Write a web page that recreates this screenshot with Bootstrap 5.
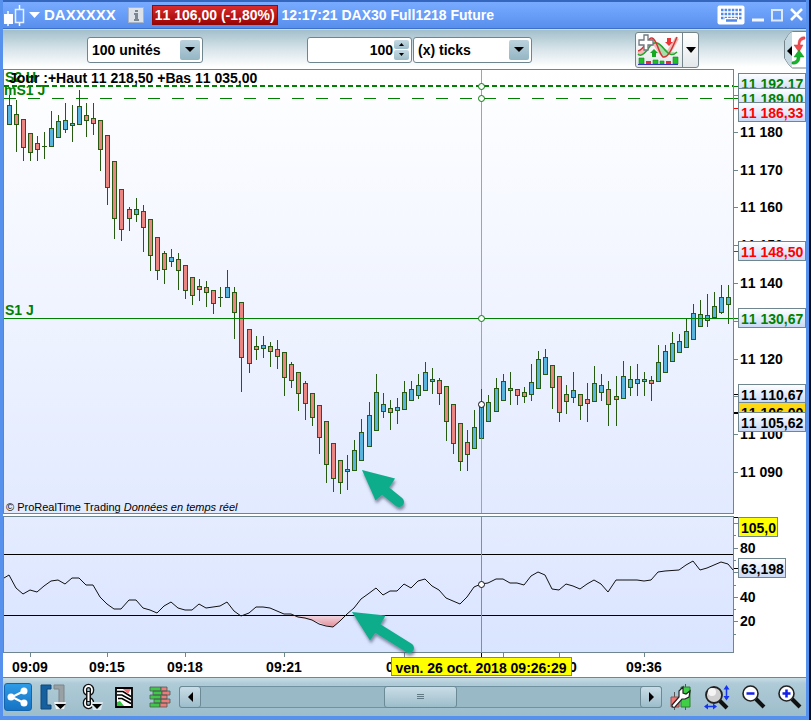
<!DOCTYPE html>
<html lang="fr">
<head>
<meta charset="utf-8">
<meta name="viewport" content="width=device-width, initial-scale=1">
<title>DAXXXXX - DAX30 Full1218 Future</title>
<link href="https://cdn.jsdelivr.net/npm/bootstrap@5.3.0/dist/css/bootstrap.min.css" rel="stylesheet">
<style>
body{background:#0a1020;padding-right:2px;font:bold 14px/18px "Liberation Sans",Arial,sans-serif;font-kerning:none;color:#000;overflow-x:hidden}
.win{min-height:100vh;background:#fff;border:solid #5791ee;border-width:0 3px 4px;box-shadow:inset 0 -1px #3a6cc4}
.titlebar{height:29px;background:linear-gradient(#78abff,#6a9ff9 45%,#588fec);border-top:2px solid #3566bd;border-bottom:1px solid #3d70c9;color:#fff;padding:0 3px 1px 0}
.titlebar button,.plain{background:none;border:0;padding:0;color:inherit;display:flex}
.g7{margin-left:7px}.g12{margin-left:12px}.g14{margin-left:14px}
.sym{font-size:15px;margin-left:4px}
.quote{background:linear-gradient(#d92c2c,#9c0505);border:1px solid #8f0b0b;padding:0 2px;height:20px;margin:0 4px 0 8px}
.tools{height:40px;background:linear-gradient(#a2bfcb,#d3e1e7 45%,#fff 95%);border-top:1px solid #c8dce6}
.fieldbox{height:26px;background:#fff;border:1px solid #70868f;border-radius:3px;padding:2px}
.fieldbox select,.fieldbox input{appearance:none;border:0;background:none;font:inherit;color:#000;padding:0 0 0 2px;outline:0;min-width:0;flex:1}
.fieldbox input{text-align:right;padding-right:1px}
.unit{width:116px;margin-left:84px}.count{width:105px;margin-left:104px}.kind{width:119px;margin-left:1px}
.arrowbox{width:20px;background:linear-gradient(#bbd2dc,#94b6c4);border-radius:2px;display:flex;align-items:center;justify-content:center}
.spin{width:15px;gap:1px}
.spin button{flex:1;border:0;padding:0;border-radius:2px;background:linear-gradient(#c5dae3,#9dbdca);display:flex;align-items:center;justify-content:center}
.indic{width:64px;height:36px;border:1px solid #75838a;border-radius:3px;background:linear-gradient(#fff,#e4e8ea);margin-left:103px}
.indic button+button{border-left:1px solid #75838a;width:16px;align-items:center;justify-content:center}
.plot{min-width:0;flex:1}
.plot svg,.scale svg,.timeline svg{display:block;width:100%}
.scale{width:72px;flex:none}
.quotes svg{height:445px}
.osc{margin-top:2px}.osc svg{height:137px}
.timeline svg{height:24px}
.timeline,.scale{font-size:14px}
svg{overflow:visible}
.cap{position:absolute;white-space:nowrap;line-height:16px}
.grn{color:#008000}
.c1{left:2px;top:0}.c2{left:1px;top:13px}.c3{left:6px;top:1px}.c4{left:2px;top:233px}
.legal{left:3px;bottom:0;font-size:11px;line-height:14px;font-weight:400;font-kerning:normal}
.bottombar{height:39px;border-top:1px solid #70868f;background:linear-gradient(#c8dde6,#aecbd7 15%,#9ebdca)}
.share{width:28px;height:28px;margin-left:1px;background:linear-gradient(#2f9be6,#1673c4);border:1px solid #1565ad;border-radius:3px;align-items:center;justify-content:center}
.track{height:22px;background:#9ab9c7;border:1px solid #7193a1;border-radius:3px}
.track button{background:linear-gradient(#c9dde6,#9dbdcb);border:1px solid #6c8996;border-radius:3px;width:22px;margin:-1px;display:flex;align-items:center;justify-content:center;padding:0}
.track .thumb{width:73px;margin:-1px 0}
</style>
<script src="https://cdn.jsdelivr.net/npm/bootstrap@5.3.0/dist/js/bootstrap.bundle.min.js"></script>
</head>
<body>
<div class="win d-flex flex-column">
<header class="titlebar d-flex align-items-center">
  <svg width="22" height="24" viewBox="0 0 22 24" aria-hidden="true"><path d="M5 8v15M16.500 2v21" stroke="#fff" stroke-width="1.500"/><path d="M1 11h9v10H1z" fill="#fff"/><path d="M12.500 6.500h8v13h-8z" fill="#6a9ff9" stroke="#e8f1ff" stroke-width="1.500"/></svg>
  <button aria-label="Choisir une valeur" class="ms-1"><svg width="11" height="6"><path d="M0 0h11L5.500 6z" fill="#fff"/></svg></button>
  <span class="sym">DAXXXXX</span>
  <button aria-label="Informations" class="g12"><svg width="16" height="16"><path d="M.5.5h15v15H.5z" fill="#dce2e8" stroke="#a9b5c6"/><path d="M7 3h3v2H7zM6 6h4v6h1v2H6v-2h1V8H6z" fill="#7b8791"/></svg></button>
  <span class="quote">11 106,00 (-1,80%)</span>
  <span class="text-nowrap">12:17:21 DAX30 Full1218 Future</span>
  <button aria-label="Clavier" class="ms-auto"><svg width="28" height="20"><rect x=".5" y=".5" width="27" height="19" rx="2" fill="#fff"/><path d="M4 5h21M4 9h21M4 13h21" stroke="#5189ea" stroke-width="2.500" stroke-dasharray="2.500 1.100"/><path d="M8 15.500h12" stroke="#fff" stroke-width="5"/><path d="M9 15.500h11" stroke="#5189ea" stroke-width="2.500"/></svg></button>
  <button aria-label="Réduire" class="g7"><svg width="12" height="16"><path d="M0 13h12" stroke="#f2f6ff" stroke-width="3"/></svg></button>
  <button aria-label="Agrandir" class="g7"><svg width="12" height="14"><path d="M1 2h10v10.500H1z" fill="none" stroke="#dce9ff" stroke-width="2"/></svg></button>
  <button aria-label="Fermer" class="g7"><svg width="13" height="14"><path d="M1 1l11 11M12 1L1 12" stroke="#fff" stroke-width="2.500"/></svg></button>
</header>

<div class="tools d-flex align-items-center">
  <div class="fieldbox unit d-flex"><select aria-label="Nombre d'unités"><option>100 unités</option></select><span class="arrowbox"><svg width="10" height="5"><path d="M0 0h10L5 5z"/></svg></span></div>
  <div class="fieldbox count d-flex"><input type="text" value="100" aria-label="Nombre de ticks"><div class="spin d-flex flex-column"><button aria-label="Plus"><svg width="5" height="3"><path d="M0 3h5L2.500 0z"/></svg></button><button aria-label="Moins"><svg width="5" height="3"><path d="M0 0h5L2.500 3z"/></svg></button></div></div>
  <div class="fieldbox kind d-flex"><select aria-label="Unité de temps"><option>(x) ticks</option></select><span class="arrowbox"><svg width="10" height="5"><path d="M0 0h10L5 5z"/></svg></span></div>
  <div class="indic d-flex">
    <button class="plain flex-grow-1" aria-label="Ajouter un indicateur"><svg width="45" height="34" viewBox="0 0 45 34">
      <path d="M2 21c8-2 9-16 14-13s6 10 11 14c3 2 9-7 14-17" fill="none" stroke="#f4b9b6" stroke-width="4"/>
      <path d="M20 9c5 1 10 11 20 10l-13 5z" fill="#a8dca8"/>
      <path d="M2 21c3 4 9-3 12-8 7-8 12 1 16 5 3 4 7 5 11 1" fill="none" stroke="#23a52e" stroke-width="1.500"/>
      <path d="M2 18c7-1 9-14 14-13s6 14 11 19c5 1 9-8 14-20" fill="none" stroke="#cf3737" stroke-width="1.500"/>
      <path d="M8 2h4v5h5v5h-5v5H8v-5H3V7h5z" fill="#fff" stroke="#6f7780" stroke-width="1.300"/>
      <path d="M31 5h4v4h2l-4 4-4-4h2z" fill="#eb3438"/><path d="M16 24v-4h-2l4-4 4 4h-2v4z" fill="#13aa20"/>
      <path d="M3 25h5v6H3zM17 27h5v4h-5zM24 28h4v3h-4zM37 24h5v7h-5z" fill="#1fbd29" stroke="#128c1b" stroke-width=".6"/><path d="M10 28h5v3h-5zM30 28h5v3h-5z" fill="#de2f36"/><path d="M2 31.500h40" stroke="#3434c5"/></svg></button>
    <button class="plain" aria-label="Liste des indicateurs"><svg width="10" height="6"><path d="M0 0h10L5 6z"/></svg></button>
  </div>
  <button class="plain ms-auto" aria-label="Ordres"><svg width="22" height="38" viewBox="0 0 22 38">
    <path d="M22 .5H8.500L5 3 .5 10v17L5 34l3.500 3H22" fill="#fff" stroke="#75838a"/><path d="M8 1L5 3 1 10v17l4 7 3 2z" fill="#c4d9e2"/><path d="M8 15v10l-5-5z"/>
    <path d="M21 6c-5-1-7 3-7 8h-4l5 7 4-7h-3c0-3 1-5 5-6z" fill="#f04c50" stroke="#d53136" stroke-width=".5"/><path d="M8 33c6 1 8-3 8-7h4l-5-7-5 7h3c0 3-1 4-5 5z" fill="#16b32c" stroke="#0a8d1d" stroke-width=".5"/></svg></button>
</div>

<main>
<section class="quotes d-flex">
  <div class="plot position-relative">
    <svg id="price" viewBox="3 69 731 445" preserveAspectRatio="none" role="img" aria-label="Cours DAX30">
      <defs><linearGradient id="g1" x2="0" y2="1"><stop stop-color="#fff"/><stop offset="1" stop-color="#e2eaff"/></linearGradient>
      <linearGradient id="g2" x2="0" y2="1"><stop stop-color="#e5ecff"/><stop offset="1" stop-color="#d9e4ff"/></linearGradient>
      <linearGradient id="g3" x2="0" y2="1"><stop stop-color="#efd7e2"/><stop offset="1" stop-color="#e58c96"/></linearGradient>
      <linearGradient id="tag" x2="0" y2="1"><stop stop-color="#fff"/><stop offset="1" stop-color="#c9d8f5"/></linearGradient>
      <filter id="sh" x="-30%" y="-30%" width="170%" height="180%"><feDropShadow dx="1" dy="3" stdDeviation="1.500" flood-color="#444a66" flood-opacity=".6"/></filter></defs>
      <rect x="3.500" y="69.500" width="730" height="444" fill="url(#g1)" stroke="#70868f"/>
      <path d="M481.500 70v443" stroke="#8ba0f2"/>
      <path d="M4 86h729" stroke="#008000" stroke-width="2" stroke-dasharray="5 3"/>
      <path d="M4 98.500h729" stroke="#008000" stroke-dasharray="12 12"/>
      <g id="candles" shape-rendering="crispEdges"></g>
      <path d="M4 318.500h729" stroke="#008000"/>
      <path d="M481.500 404v35" stroke="#3d6bdc"/>
      <g fill="#fff" stroke="#008000"><circle cx="481.500" cy="86.500" r="3"/><circle cx="481.500" cy="98.500" r="3"/><circle cx="481.500" cy="318.500" r="3"/><circle cx="481.500" cy="404.500" r="3" stroke="#111"/></g>
      <g filter="url(#sh)" fill="#0aad8b"><path d="M362 470l33 8.500-6 9.500-7 7-6.500 5.500z"/><path d="M383 489l16 13" stroke="#0aad8b" stroke-width="10" stroke-linecap="round"/></g>
    </svg>
    <span class="cap grn c1">S2 H</span><span class="cap grn c2">mS1 J</span><span class="cap c3">Jour :+Haut 11 218,50 +Bas 11 035,00</span><span class="cap grn c4">S1 J</span>
    <div class="cap legal">© ProRealTime Trading <i>Données en temps réel</i></div>
  </div>
  <div class="scale"><svg id="pscale" viewBox="734 69 72 445"></svg></div>
</section>
<section class="osc d-flex">
  <div class="plot"><svg viewBox="3 516 731 137" preserveAspectRatio="none" role="img" aria-label="Indicateur" class="position-relative z-1">
    <rect x="3.500" y="516.500" width="730" height="136" fill="url(#g2)" stroke="#70868f"/>
    <path d="M285 615.500l18 3 14 3 8 3.500 8 2 7-6 7-5.500z" fill="url(#g3)"/>
    <path d="M4 554.500h729M4 615.500h729" stroke="#000"/>
    <path d="M481.500 517v136" stroke="#6f88ec"/>
    <polyline id="line" fill="none" stroke="#111"/>
    <circle cx="481.500" cy="584.500" r="3" fill="#fff" stroke="#111"/>
    <g filter="url(#sh)" fill="#0aad8b"><path d="M352 612l33.500 3.500-5 9-5 8-5.500 8z"/><path d="M377 628l32 20" stroke="#0aad8b" stroke-width="10" stroke-linecap="round"/></g>
  </svg></div>
  <div class="scale"><svg id="oscale" viewBox="734 516 72 137"></svg></div>
</section>
<div class="timeline"><svg id="tscale"></svg></div>
</main>

<footer class="bottombar d-flex align-items-center mt-auto">
  <button class="plain share" aria-label="Partager"><svg width="22" height="20"><path d="M17 4L5 10l12 6" fill="none" stroke="#fff" stroke-width="2"/><circle cx="17" cy="4" r="3.500" fill="#fff"/><circle cx="4" cy="10" r="3.500" fill="#fff"/><circle cx="17" cy="16" r="3.500" fill="#fff"/></svg></button>
  <button class="plain ms-2" aria-label="Zones"><svg width="27" height="26"><path d="M1 1h10v4H7v16h4v4H1z" fill="#17609f" stroke="#0e4678"/><path d="M14 1h10v20h-5V5h-5z" fill="#9aa1a4" stroke="#7d8588"/><path d="M14 18h12l-2 7H16z" fill="#fff" opacity=".8"/><path d="M15 20h11l-5.500 5z"/></svg></button>
  <button class="plain g14" aria-label="Lier"><svg width="22" height="26"><g fill="none"><rect x="4" y="2" width="7" height="8" rx="3.500" stroke="#111" stroke-width="4.500"/><rect x="4" y="15" width="7" height="8" rx="3.500" stroke="#111" stroke-width="4.500"/><rect x="4" y="2" width="7" height="8" rx="3.500" stroke="#fff" stroke-width="1.800"/><rect x="4" y="15" width="7" height="8" rx="3.500" stroke="#fff" stroke-width="1.800"/><path d="M7.500 7v11" stroke="#111" stroke-width="5"/><path d="M7.500 8v9" stroke="#fff" stroke-width="2"/></g><path d="M10 18h12l-2 8h-8z" fill="#dbe8ee"/><path d="M11 20h10l-5 5z"/></svg></button>
  <button class="plain g12" aria-label="Modèles"><svg width="18" height="21"><path d="M1 1h16v19H1z" fill="#fff" stroke="#000" stroke-width="1.800"/><path d="M2 4.500h6l8 5M2 8h5l9 5M3 11.500h4l9 5" stroke="#000" stroke-width="1.700" fill="none"/><path d="M8 2h8l-3 5z" fill="#f07077"/><path d="M2 19v-4l3-1 4 5z" fill="#34c441"/></svg></button>
  <button class="plain ms-3" aria-label="Carnet d'ordres"><svg width="22" height="22"><g stroke="#4b5b57" stroke-width=".8"><path d="M1 1h11v4H1zM4 5h9v4H4zM1 9h11v4H1zM5 13h7v4H5zM1 17h10v4H1z" fill="#3fc847"/><path d="M12 1h6v4h-6zM13 5h8v4h-8zM12 9h6v4h-6zM12 13h9v4h-9zM11 17h7v4h-7z" fill="#ec7d7b"/></g></svg></button>
  <div class="track d-flex flex-grow-1 ms-2 me-1"><button aria-label="Reculer"><svg width="5" height="10"><path d="M5 0v10L0 5z"/></svg></button><span class="flex-grow-1"></span><button class="thumb" aria-label="Position"><svg width="7" height="6"><path d="M0 .5h7M0 2.500h7M0 4.500h7" stroke="#607984"/></svg></button><span class="flex-grow-1"></span><button aria-label="Avancer"><svg width="5" height="10"><path d="M0 0v10l5-5z"/></svg></button></div>
  <button class="plain ms-1" aria-label="Réglages"><svg width="22" height="26"><path d="M4.500 8v18M15.500 0v26" stroke="#555"/><path d="M1 13h8v10H1z" fill="#ed7876" stroke="#94504f"/><path d="M11 3h9v20h-9z" fill="#3ecf47" stroke="#317d35"/><path d="M2 21l7-8V7l4-4v6l3 1 4-3-1 6-4 2-3 0-7 8q-3 1-3-2z" fill="#fff" stroke="#222" stroke-width="1.200"/></svg></button>
  <button class="plain g12" aria-label="Ajuster"><svg width="26" height="25"><path d="M15 15l8 8" stroke="#111" stroke-width="4"/><circle cx="10" cy="10" r="8" fill="#d0d0d0" stroke="#222" stroke-width="1.800"/><circle cx="8" cy="7" r="4" fill="#f5f5f5"/><path d="M22.500 3v10M2 21.500h9" stroke="#1533f0" stroke-width="1.500"/><path d="M22.500 0l3 4.500h-6zM22.500 15.500l3-4.500h-6zM0 21.500l4-3v6zM13 21.500l-4-3v6z" fill="#1533f0"/></svg></button>
  <button class="plain g12" aria-label="Zoom arrière"><svg width="24" height="24"><path d="M14 14l8 8" stroke="#111" stroke-width="4"/><circle cx="8.500" cy="8.500" r="7.500" fill="#fff" stroke="#222" stroke-width="1.600"/><path d="M4.500 8.500h8" stroke="#1520e8" stroke-width="2.500"/></svg></button>
  <button class="plain g12 me-1" aria-label="Zoom avant"><svg width="24" height="24"><path d="M14 14l8 8" stroke="#111" stroke-width="4"/><circle cx="8.500" cy="8.500" r="7.500" fill="#fff" stroke="#222" stroke-width="1.600"/><path d="M4.500 8.500h8M8.500 4.500v8" stroke="#1520e8" stroke-width="2.500"/></svg></button>
</footer>
</div>
<script>
// Candles: x, high, body top, body bottom, low, direction (1 up, 0 down)
const candles=`9,95,105,125,125,1 16,100,114,125,152,0 23,119,119,148,161,0 30,133,133,153,161,0 37,136,143,150,161,0 44,132,146,147,159,1 51,111,128,147,147,1 58,115,121,138,138,1 65,103,120,130,133,1 72,105,123,126,142,1 79,90,106,125,125,1 86,103,115,121,137,0 93,103,118,124,135,0 100,120,120,150,171,0 107,135,135,188,205,0 114,161,161,219,239,0 121,189,189,230,241,0 129,207,209,219,231,0 136,198,209,215,222,1 143,205,211,228,252,0 150,219,219,256,271,0 157,237,237,271,280,0 164,251,253,270,284,0 171,249,257,262,267,1 178,253,259,271,290,0 185,265,265,291,299,0 192,277,277,296,305,0 199,279,286,290,301,0 206,281,287,293,307,0 213,290,290,304,314,0 220,287,297,298,307,1 227,270,287,298,298,1 234,287,292,313,339,0 241,302,302,358,392,0 249,329,329,364,373,0 256,336,346,350,360,0 263,336,345,349,358,1 270,342,346,352,367,0 277,340,349,357,369,0 284,352,352,378,396,0 291,362,364,381,388,0 298,372,372,394,411,0 305,381,383,404,420,0 312,393,393,418,426,0 319,405,405,438,454,0 326,421,421,465,483,0 333,443,443,479,492,0 340,460,460,483,494,0 347,455,469,472,490,1 354,440,450,471,471,1 361,419,432,461,461,1 369,402,415,447,447,1 376,374,392,431,431,1 383,393,404,412,418,1 390,400,408,413,430,0 397,398,407,411,424,1 404,381,392,410,410,1 411,381,389,401,401,1 418,374,385,396,399,1 425,362,372,391,391,1 432,368,379,382,394,1 439,378,380,394,405,0 446,386,386,422,441,0 453,404,404,444,454,0 460,423,423,462,471,0 467,430,442,455,471,0 474,410,427,449,449,1 481,389,404,439,439,1 488,395,402,422,422,1 496,378,388,412,412,1 503,374,381,401,401,1 510,372,388,391,405,1 517,389,389,396,405,0 524,387,392,397,403,0 531,364,382,395,401,1 538,351,359,389,389,1 545,349,357,375,375,1 552,365,365,388,409,0 559,376,376,413,422,0 566,385,394,402,414,0 573,372,390,398,403,1 580,394,394,406,420,0 587,383,399,404,422,0 594,366,383,402,402,1 601,374,385,393,401,1 608,381,389,405,426,0 616,376,396,400,426,0 623,361,376,399,399,1 630,366,379,388,396,1 637,364,379,384,396,1 644,372,379,382,396,1 651,376,380,384,401,0 658,345,362,382,382,1 665,345,351,373,373,1 672,332,343,362,362,1 679,334,341,353,353,1 686,318,331,348,348,1 693,304,313,340,340,1 700,300,314,327,327,1 707,294,315,321,327,1 714,292,306,318,318,1 721,285,297,313,314,1 728,285,297,305,324,1`;
document.getElementById('candles').innerHTML=candles.split(' ').map(s=>{
  const [x,h,t,b,l,up]=s.split(',').map(Number);
  return `<rect x="${x}" y="${h}" width="1" height="${l-h}" fill="#255a10"/><rect x="${x-2}" y="${t}" width="5" height="${b-t}" fill="#255a10"/>`+
    (b-t>2?`<rect x="${x-1}" y="${t+1}" width="3" height="${b-t-2}" fill="${up?'#58b4dc':'#ea8581'}"/>`:'');
}).join('');

document.getElementById('line').setAttribute('points','4,578 9,575 16,588 23,594 30,590 37,592 44,586 51,581 58,580 65,584 72,578 79,578 86,585 93,585 100,597 107,604 114,609 121,609 129,600 136,600 143,608 150,610 157,613 164,606 171,602 178,608 185,610 192,610 199,604 206,608 213,607 220,606 227,602 234,611 241,616 249,613 256,607 263,607 270,608 284,614 291,614 298,617 305,618 312,620 319,624 326,626 333,627 340,621 347,614 354,608 361,599 368,594 376,588 383,595 390,591 397,591 404,584 411,588 418,581 425,579 432,586 439,590 446,598 453,601 460,604 467,597 474,587 481,584 488,583 496,579 503,579 510,583 517,583 524,585 531,576 538,572 545,575 552,589 559,590 566,584 573,586 580,589 587,584 594,580 601,584 608,592 616,580 637,580 644,581 651,580 658,572 665,571 679,570 686,565 693,561 700,570 707,568 714,565 721,562 728,564 733,570');

const tick=(y,w,c='#70868f',h=1)=>`<rect x="734" y="${y}" width="${w}" height="${h}" fill="${c}"/>`;
const label=(y,s)=>`<text x="740" y="${y}">${s}</text>`;
const tag=(y,w,s,c='#000',bg='url(#tag)')=>`<rect x="738.5" y="${y}.5" width="${w}" height="19" fill="${bg}" stroke="#70868f"/><text x="741" y="${y+16}" fill="${c}">${s}</text>`;

document.getElementById('pscale').innerHTML=
  [95,132,170,207,245,283,321,359,396,434,472].map(y=>tick(y,4)).join('')+
  tick(86,4,'#008000')+tick(98,4,'#008000')+tick(108,4,'#f00')+tick(251,4,'#f00')+tick(318,4,'#008000')+tick(394,4,'#000')+tick(412,4,'#000',2)+
  [[137,'180'],[175,'170'],[212,'160'],[250,'150'],[288,'140'],[364,'120'],[439,'100'],[477,'090']].map(a=>label(a[0],'11 '+a[1])).join('')+
  tag(73,67,'11 192,17','#008000')+tag(88,67,'11 189,00','#008000')+tag(102,67,'11 186,33','#f00')+
  tag(241,67,'11 148,50','#f00')+tag(308,67,'11 130,67','#008000')+tag(384,67,'11 110,67')+
  tag(402,67,'11 106,00','#000','#ffd814')+tag(412,67,'11 105,62');

document.getElementById('oscale').innerHTML=
  [523,548,572,597,621].map(y=>tick(y,4)).join('')+[535,560,585,609,634].map(y=>tick(y,2)).join('')+tick(517,4,'#000')+tick(568,4,'#000')+
  label(553,'80')+label(602,'40')+label(626,'20')+tag(517,39,'105,0','#000','#ff0')+tag(558,47,'63,198');

// Positions along the time axis, as shares of its width
const pct=x=>(x-3)/803*100+'%';
document.getElementById('tscale').innerHTML=
  [30,107,185,284,404,481,503,559,644].map(x=>`<rect x="${pct(x)}" y="0" width="1" height="4" fill="${x==481?'#000':'#70868f'}"/>`).join('')+
  [[30,'09:09'],[107,'09:15'],[185,'09:18'],[284,'09:21'],[404,'09:24'],[559,'09:30'],[644,'09:36']].map(a=>`<text x="${pct(a[0])}" y="19" text-anchor="middle">${a[1]}</text>`).join('')+
  `<svg x="${pct(391)}" y="4" width="181" height="20"><rect x=".5" y=".5" width="180" height="18" fill="#ff0" stroke="#8c8c3c"/><text x="90" y="16" text-anchor="middle">ven. 26 oct. 2018 09:26:29</text></svg>`;
</script>
</body>
</html>
